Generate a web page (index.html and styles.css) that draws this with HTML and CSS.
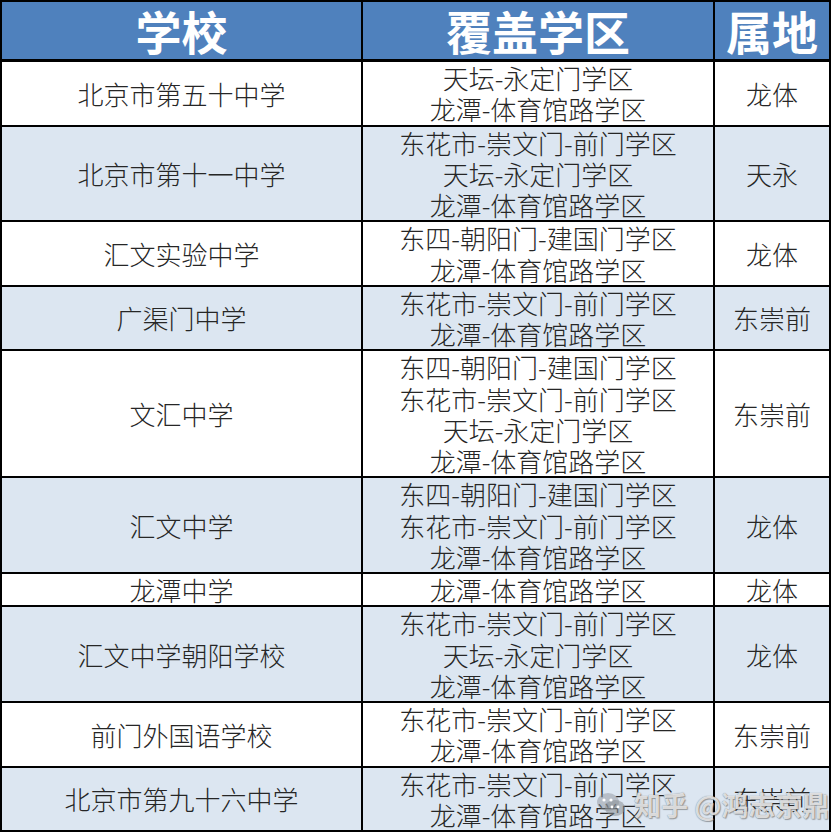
FILE: index.html
```html
<!DOCTYPE html>
<html lang="zh-CN">
<head>
<meta charset="utf-8">
<title>学校 覆盖学区</title>
<link rel="stylesheet" href="styles.css">
</head>
<body>
<div class="page">
  <div class="table">
    <div class="cell head">学校</div>
    <div class="cell head">覆盖学区</div>
    <div class="cell head">属地</div>

    <div class="cell">北京市第五十中学</div>
    <div class="cell">天坛-永定门学区<br>龙潭-体育馆路学区</div>
    <div class="cell">龙体</div>

    <div class="cell alt">北京市第十一中学</div>
    <div class="cell alt">东花市-崇文门-前门学区<br>天坛-永定门学区<br>龙潭-体育馆路学区</div>
    <div class="cell alt">天永</div>

    <div class="cell">汇文实验中学</div>
    <div class="cell">东四-朝阳门-建国门学区<br>龙潭-体育馆路学区</div>
    <div class="cell">龙体</div>

    <div class="cell alt">广渠门中学</div>
    <div class="cell alt">东花市-崇文门-前门学区<br>龙潭-体育馆路学区</div>
    <div class="cell alt">东崇前</div>

    <div class="cell">文汇中学</div>
    <div class="cell">东四-朝阳门-建国门学区<br>东花市-崇文门-前门学区<br>天坛-永定门学区<br>龙潭-体育馆路学区</div>
    <div class="cell">东崇前</div>

    <div class="cell alt">汇文中学</div>
    <div class="cell alt">东四-朝阳门-建国门学区<br>东花市-崇文门-前门学区<br>龙潭-体育馆路学区</div>
    <div class="cell alt">龙体</div>

    <div class="cell">龙潭中学</div>
    <div class="cell">龙潭-体育馆路学区</div>
    <div class="cell">龙体</div>

    <div class="cell alt">汇文中学朝阳学校</div>
    <div class="cell alt">东花市-崇文门-前门学区<br>天坛-永定门学区<br>龙潭-体育馆路学区</div>
    <div class="cell alt">龙体</div>

    <div class="cell">前门外国语学校</div>
    <div class="cell">东花市-崇文门-前门学区<br>龙潭-体育馆路学区</div>
    <div class="cell">东崇前</div>

    <div class="cell alt">北京市第九十六中学</div>
    <div class="cell alt">东花市-崇文门-前门学区<br>龙潭-体育馆路学区</div>
    <div class="cell alt">东崇前</div>
  </div>

  <div class="watermark">
    <svg class="wm-icon" width="30" height="28" viewBox="0 0 30 28">
      <ellipse cx="12" cy="11" rx="11" ry="9" fill="#8a8f96" opacity="0.45"/>
      <ellipse cx="19" cy="17" rx="10" ry="8" fill="#8a8f96" opacity="0.55"/>
      <circle cx="8" cy="9" r="1.6" fill="#fff"/>
      <circle cx="15" cy="9" r="1.6" fill="#fff"/>
      <circle cx="16" cy="16" r="1.4" fill="#fff"/>
      <circle cx="22" cy="16" r="1.4" fill="#fff"/>
    </svg>
    <span class="wm-text">知乎 @鸿志京鼎</span>
  </div>
</div>
</body>
</html>
```
FILE: styles.css
```css
html, body {
  margin: 0;
  padding: 0;
  background: #ffffff;
}

.page {
  position: relative;
  width: 834px;
  height: 834px;
  overflow: hidden;
}

.table {
  display: grid;
  grid-template-columns: 361px 352px 116px;
  width: 829px;
  border-left: 2px solid #000;
  border-top: 2px solid #000;
  font-family: "Noto Sans CJK SC", "Noto Sans", sans-serif;
}

.cell {
  display: flex;
  align-items: center;
  justify-content: center;
  text-align: center;
  border-right: 2px solid #000;
  border-bottom: 2px solid #000;
  background: #ffffff;
  color: #262626;
  font-size: 26px;
  font-weight: 300;
  line-height: 31.25px;
  white-space: nowrap;
}

.cell.alt {
  background: #dce6f1;
}

.cell.head {
  background: #4f81bd;
  color: #ffffff;
  font-size: 46px;
  font-weight: 700;
  line-height: 57px;
  border-bottom-width: 3px;
}

.watermark {
  position: absolute;
  left: 596px;
  top: 785px;
  display: flex;
  align-items: center;
  gap: 8px;
  pointer-events: none;
}

.wm-text {
  font-family: "Noto Sans CJK SC", sans-serif;
  font-size: 27px;
  font-weight: 700;
  color: rgba(255, 255, 255, 0.75);
  text-shadow: 0 0 1px rgba(90, 90, 90, 0.8), 1px 1px 1px rgba(90, 90, 90, 0.5);
  white-space: nowrap;
}
```
